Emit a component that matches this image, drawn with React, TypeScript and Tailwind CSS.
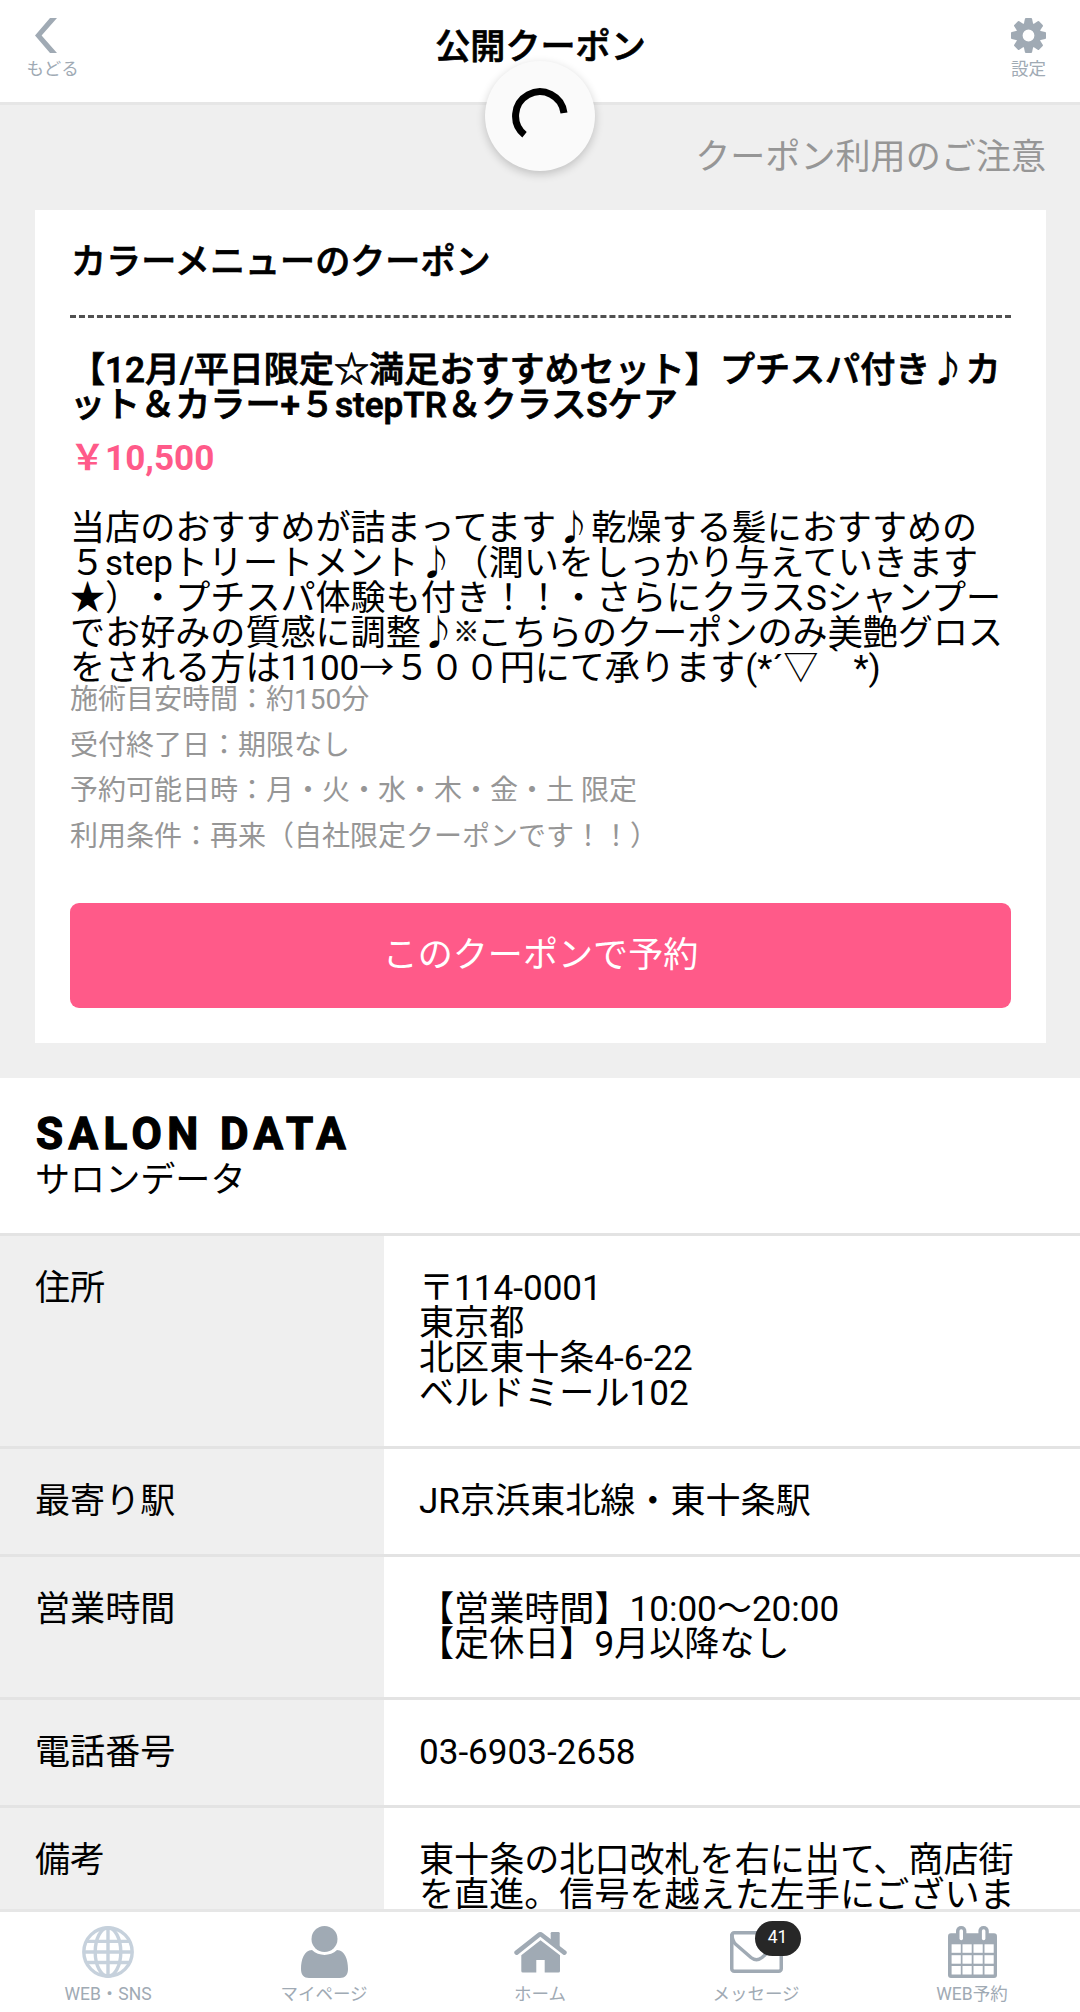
import type { ReactNode } from 'react';

const META = [
  '施術目安時間：約150分',
  '受付終了日：期限なし',
  '予約可能日時：月・火・水・木・金・土 限定',
  '利用条件：再来（自社限定クーポンです！！）',
];

const SALON_ROWS = [
  { label: '住所', lines: ['〒114-0001', '東京都', '北区東十条4-6-22', 'ベルドミール102'] },
  { label: '最寄り駅', lines: ['JR京浜東北線・東十条駅'] },
  { label: '営業時間', lines: ['【営業時間】10:00〜20:00', '【定休日】9月以降なし'] },
  { label: '電話番号', lines: ['03-6903-2658'] },
  { label: '備考', lines: ['東十条の北口改札を右に出て、商店街', 'を直進。信号を越えた左手にございま'] },
];

function BackIcon() {
  return (
    <svg width="22" height="35" viewBox="0 0 22 35" fill="#a0aab4">
      <path d="M15 0h7L6.6 17.5 22 35h-7L0 17.5z" />
    </svg>
  );
}

function GearIcon() {
  return (
    <svg width="35" height="35" viewBox="-17.5 -17.5 35 35" fill="#a0aab4">
      {[0, 45, 90, 135, 180, 225, 270, 315].map((deg) => (
        <path key={deg} d="M-5-10L-3.6-16.6Q-3.4-17.5-2.6-17.5H2.6Q3.4-17.5 3.6-16.6L5-10z" transform={`rotate(${deg})`} />
      ))}
      <circle r="9.3" fill="none" stroke="#a0aab4" strokeWidth="6.8" />
    </svg>
  );
}

function GlobeIcon() {
  return (
    <svg width="52" height="52" viewBox="0 0 52 52" fill="none" stroke="#c6d1dc" strokeWidth="3.4">
      <circle cx="26" cy="26" r="24.2" />
      <ellipse cx="26" cy="26" rx="12.8" ry="24.2" />
      <path d="M26 2v48M2 26h48M4.5 15.4h43M4.5 36.5h43" />
    </svg>
  );
}

function PersonIcon() {
  return (
    <svg width="47" height="52" viewBox="0 0 47 52" fill="#a0aab4">
      <circle cx="23.5" cy="13" r="13" />
      <path d="M11 24c7 6.5 18 6.5 25 0 8 0 11 10 11 19 0 6-3 9-8 9H8c-5 0-8-3-8-9 0-9 3-19 11-19z" />
    </svg>
  );
}

function HomeIcon() {
  return (
    <svg width="53" height="41" viewBox="0 0 53 41" fill="#a0aab4">
      <path d="M36.7 12V1.2Q36.7 0 38 0h6.5q1.2 0 1.2 1.2V17z" />
      <path d="M2.6 20.6L24.8 3Q26.3 1.9 27.8 3L50.4 20.6" fill="none" stroke="#a0aab4" strokeWidth="4.6" strokeLinecap="round" />
      <path d="M7.3 23.3L26.5 8.3 46 23.3V39q0 1.5-1.5 1.5H30.7V28h-8.4v12.5H8.8Q7.3 40.5 7.3 39z" />
    </svg>
  );
}

function MailIcon() {
  return (
    <svg width="53" height="42" viewBox="0 0 53 42" fill="none" stroke="#a0aab4" strokeWidth="3.5">
      <rect x="1.75" y="1.75" width="49.5" height="38.5" rx="2.5" />
      <path d="M2 3c0 5 1 8 4 10.5l15 13q5.5 4.5 11 0l15-13c3-2.5 4-5.5 4-10.5" />
    </svg>
  );
}

function CalendarIcon() {
  return (
    <svg width="49" height="52" viewBox="0 0 49 52" fill="#a0aab4">
      <rect y="7.3" width="49" height="44.7" rx="3" />
      <rect x="8" width="10.4" height="16" rx="5" />
      <rect x="30.4" width="10.4" height="16" rx="5" />
      <g fill="#fff">
        <rect x="11.5" y="3.3" width="3.5" height="11" rx="1.7" />
        <rect x="33.9" y="3.3" width="3.5" height="11" rx="1.7" />
        {[18.3, 29.2, 40].map((y) =>
          [3.6, 14.5, 25.5, 36.5].map((x) => <rect key={`${x}-${y}`} x={x} y={y} width="9.2" height="8.5" />),
        )}
      </g>
    </svg>
  );
}

function Tab({ icon, label, badge }: { icon: ReactNode; label: string; badge?: number }) {
  return (
    <div className="flex w-[216px] flex-col items-center pt-[14px]">
      <div className="relative flex h-[52px] items-center">
        {icon}
        {badge && (
          <span className="absolute -top-[5px] left-[25px] flex h-[35px] w-[46px] items-center justify-center rounded-[17.5px] bg-[#272727] pb-[2px] text-[17.5px] text-white">
            {badge}
          </span>
        )}
      </div>
      <span className="mt-2 text-[17.5px]">{label}</span>
    </div>
  );
}

export default function App() {
  return (
    <div className="relative flex h-[2012px] w-[1080px] flex-col overflow-hidden bg-white font-[Roboto,'Noto_Sans_CJK_JP',sans-serif] text-[35.1px] leading-[35px] whitespace-nowrap text-black [text-spacing-trim:space-all]">
      <header className="flex h-[105px] shrink-0 justify-between border-b-[3px] border-[#e6e6e6] text-[17.5px] leading-[17px] text-[#a0aab4]">
        <div className="flex w-[200px] flex-col pt-[18px] pl-[26.5px]">
          <div className="pl-[8.5px]"><BackIcon /></div>
          <span className="mt-2">もどる</span>
        </div>
        <h1 className="pt-[30px] pl-px text-[35.1px] leading-[35px] font-medium text-black [-webkit-text-stroke:0.7px]">公開クーポン</h1>
        <div className="flex w-[200px] flex-col items-end pt-[18px] pr-[34px]">
          <GearIcon />
          <span className="mt-2">設定</span>
        </div>
      </header>

      {/* pull-to-refresh spinner */}
      <div className="absolute top-[61px] left-[485px] flex h-[110px] w-[110px] items-center justify-center rounded-full bg-[#fafafa] shadow-[0_3px_10px_rgba(0,0,0,0.2)]">
        <svg width="60" height="60" viewBox="-30 -30 60 60" fill="none" stroke="#000" strokeWidth="7">
          <path d="M-15.5 18.8A24.3 24.3 0 1 1 24-3" />
        </svg>
      </div>

      <main className="h-[1804px] shrink-0 overflow-hidden">
        <section className="bg-[#efefef] py-[35px] pr-[34px] pl-[35px]">
          <p className="text-right text-[#969696]">クーポン利用のご注意</p>
          <div className="mt-[35px] h-[833px] bg-white px-[35px] pt-[35px]">
            <h2 className="border-b-[3px] border-dashed border-[#505050] pb-[35px] pl-px font-medium [-webkit-text-stroke:0.7px]">カラーメニューのクーポン</h2>
            <h3 className="mt-[35px] font-medium [-webkit-text-stroke:0.8px]">
              【12月/平日限定☆満足おすすめセット】プチスパ付き♪カ<br />
              ット＆カラー+５stepTR＆クラスSケア
            </h3>
            <p className="mt-[18px] font-bold text-[#ff5a89]">￥10,500</p>
            <p className="mt-[35px]">
              当店のおすすめが詰まってます♪乾燥する髪におすすめの<br />
              ５stepトリートメント♪（潤いをしっかり与えていきます<br />
              ★）・プチスパ体験も付き！！・さらにクラスSシャンプー<br />
              でお好みの質感に調整♪<span className="-mx-[2.5px] align-[4px] text-[26px] leading-[0] font-medium [-webkit-text-stroke:0.5px]">※</span>こちらのクーポンのみ美艶グロス<br />
              をされる方は1100→５００円にて承ります(*´▽｀*)
            </p>
            <ul className="flex flex-col gap-[17.5px] text-[28px] leading-[28px] text-[#969696]">
              {META.map((line) => <li key={line}>{line}</li>)}
            </ul>
            <button className="mt-[52px] flex h-[105px] w-full items-center justify-center rounded-[9px] bg-[#ff5a89] text-white">
              このクーポンで予約
            </button>
          </div>
        </section>

        <section>
          <div className="h-[155px] px-[35px] pt-[31px]">
            <h2 className="pb-1 pl-px text-[43.9px] leading-[50px] font-bold tracking-[5.5px] [-webkit-text-stroke:1.3px]">SALON DATA</h2>
            <p>サロンデータ</p>
          </div>
          <dl>
            {SALON_ROWS.map((row) => (
              <div key={row.label} className="flex border-t-[3px] border-[#e3e3e3]">
                <dt className="w-[384px] shrink-0 bg-[#efefef] p-[35px]">{row.label}</dt>
                <dd className="p-[35px]">
                  {row.lines.map((line) => <p key={line}>{line}</p>)}
                </dd>
              </div>
            ))}
          </dl>
        </section>
      </main>

      <nav className="flex h-[103px] shrink-0 border-t-[3px] border-[#e6e6e6] bg-white leading-[17px] text-[#a0aab4]">
        <Tab icon={<GlobeIcon />} label="WEB・SNS" />
        <Tab icon={<PersonIcon />} label="マイページ" />
        <Tab icon={<HomeIcon />} label="ホーム" />
        <Tab icon={<MailIcon />} label="メッセージ" badge={41} />
        <Tab icon={<CalendarIcon />} label="WEB予約" />
      </nav>
    </div>
  );
}
